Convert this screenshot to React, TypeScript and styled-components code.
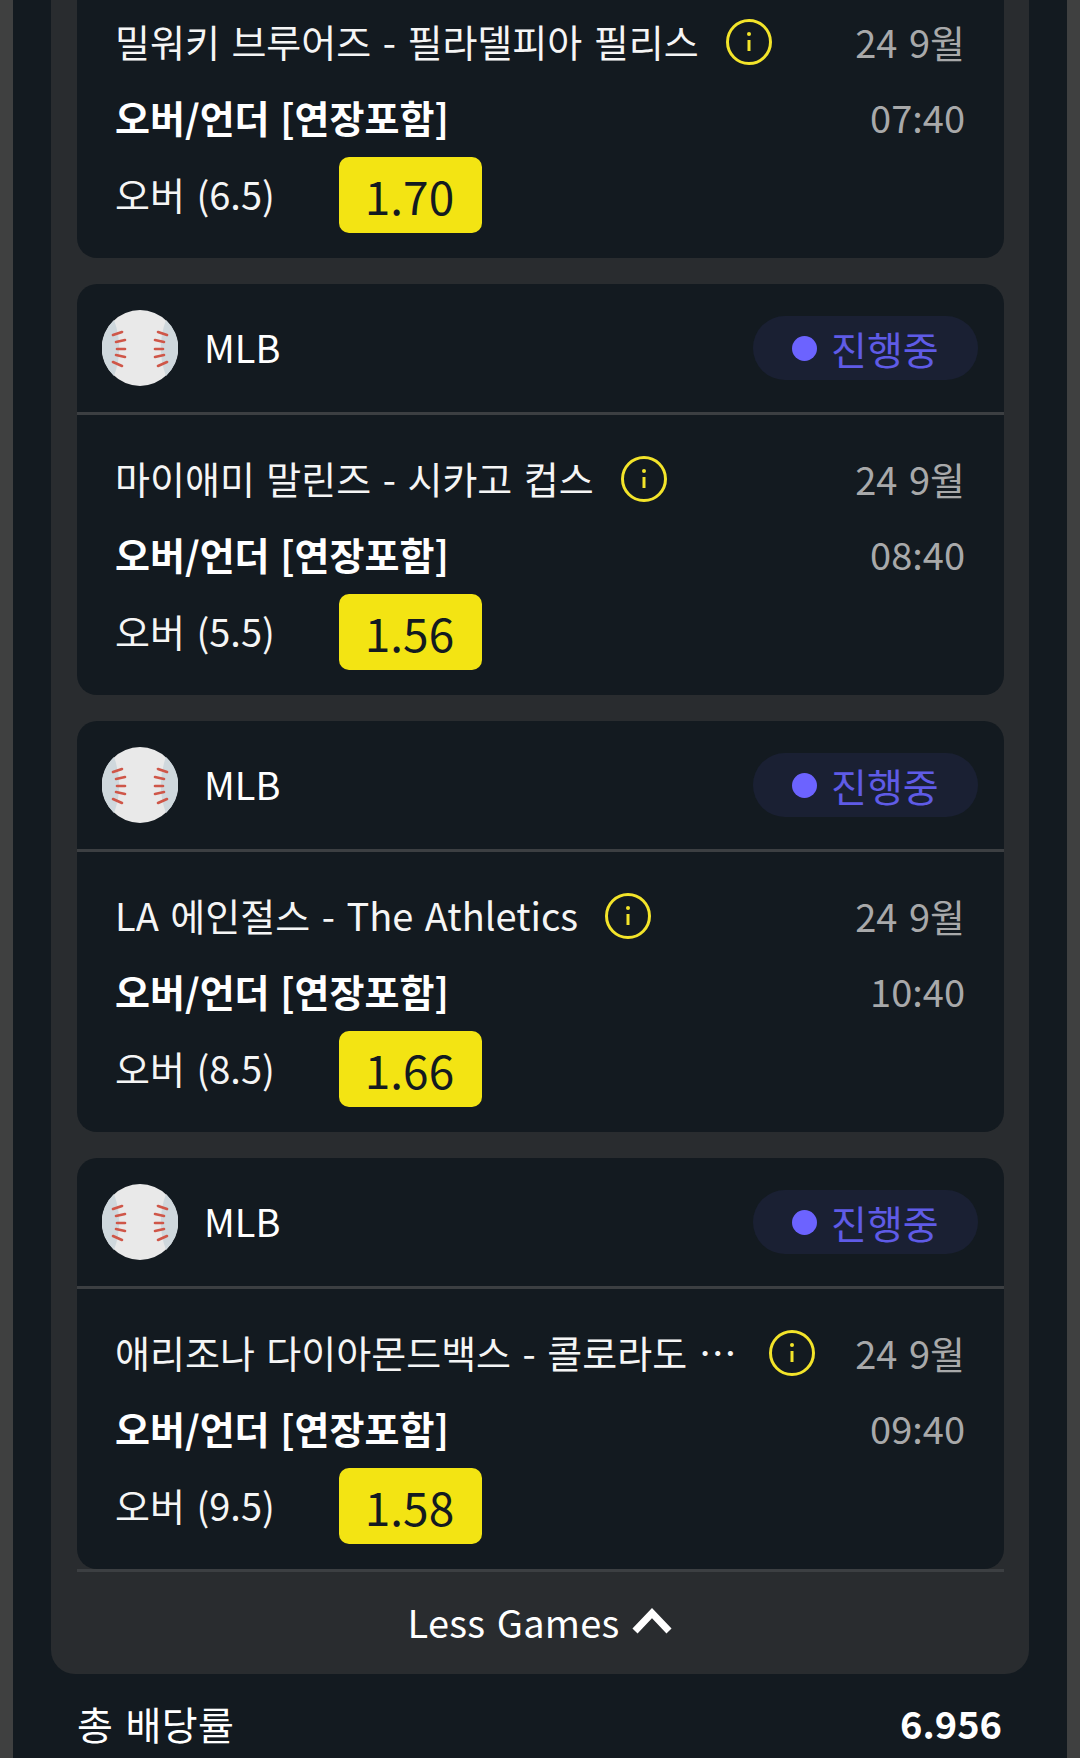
import React from 'react';
import styled, { createGlobalStyle } from 'styled-components';

interface Game {
  title: string;
  line: string;
  odds: string;
  date: string;
  time: string;
}

const games: Game[] = [
  { title: '밀워키 브루어즈 - 필라델피아 필리스', line: '오버 (6.5)', odds: '1.70', date: '24 9월', time: '07:40' },
  { title: '마이애미 말린즈 - 시카고 컵스', line: '오버 (5.5)', odds: '1.56', date: '24 9월', time: '08:40' },
  { title: 'LA 에인절스 - The Athletics', line: '오버 (8.5)', odds: '1.66', date: '24 9월', time: '10:40' },
  { title: '애리조나 다이아몬드백스 - 콜로라도 로키스', line: '오버 (9.5)', odds: '1.58', date: '24 9월', time: '09:40' },
];

const GlobalStyle = createGlobalStyle`
  html, body {
    margin: 0;
    padding: 0;
    background: #131a20;
  }
  body {
    font-family: "Noto Sans CJK KR", "Noto Sans", sans-serif;
    color: #fff;
    word-spacing: 3px;
  }
`;

const Page = styled.div`
  width: 1080px;
  height: 1758px;
  box-sizing: border-box;
  overflow: hidden;
  background: #131a20;
  border-left: 13px solid #3f4040;
  border-right: 13px solid #3f4040;
  padding: 0 38px;
`;

const Panel = styled.div`
  background: #292c2f;
  border-radius: 0 0 24px 24px;
  padding: 0 25px 0 26px;
`;

const Card = styled.div`
  background: #131a20;
  border-radius: 20px;
  & + & {
    margin-top: 26px;
  }
  &:first-child {
    border-radius: 0 0 20px 20px;
  }
`;

const CardHeader = styled.div`
  height: 131px;
  box-sizing: border-box;
  padding: 0 26px 0 25px;
  display: flex;
  align-items: center;
  border-bottom: 3px solid #3c3f42;
`;

const League = styled.span`
  margin: -2px 0 0 26px;
  font-size: 38px;
  line-height: 48px;
  flex: 1;
`;

const LiveBadge = styled.div`
  width: 225px;
  height: 64px;
  border-radius: 32px;
  background: #1a2033;
  display: flex;
  align-items: center;
  padding-left: 39px;
  box-sizing: border-box;
  gap: 14px;
  color: #5f5be6;
  font-size: 39px;
  line-height: 60px;
`;

const LiveDot = styled.span`
  width: 25px;
  height: 25px;
  border-radius: 50%;
  background: #6c63ff;
`;

const CardBody = styled.div<{ $clipped?: boolean }>`
  padding: ${(p) => (p.$clipped ? '20px' : '42px')} 39px 25px 38px;
  display: flex;
  flex-direction: column;
`;

const Row = styled.div<{ $gap: number }>`
  display: flex;
  align-items: center;
  justify-content: space-between;
  height: 44px;
  margin-bottom: ${(p) => p.$gap}px;
`;

const TitleWrap = styled.div`
  display: flex;
  align-items: center;
  gap: 27px;
  min-width: 0;
`;

const Title = styled.div`
  font-size: 38px;
  line-height: 56px;
  margin-top: -2px;
  max-width: 627px;
  white-space: nowrap;
  overflow: hidden;
  text-overflow: ellipsis;
  color: #f5f5f5;
`;

const Market = styled.div`
  font-size: 38px;
  font-weight: 700;
  line-height: 44px;
  word-spacing: 2px;
`;

const Side = styled.div`
  font-size: 38px;
  line-height: 44px;
  color: #a8a9aa;
`;

const OddsRow = styled.div`
  display: flex;
  align-items: center;
  height: 76px;
`;

const Line = styled.div`
  width: 224px;
  font-size: 38px;
  line-height: 44px;
  color: #f5f5f5;
  margin-top: -3px;
`;

const OddsButton = styled.div`
  width: 143px;
  height: 76px;
  box-sizing: border-box;
  padding-right: 2px;
  border-radius: 10px;
  background: #f3e413;
  color: #131a20;
  font-size: 46px;
  display: flex;
  align-items: center;
  justify-content: center;
`;

const LessRow = styled.div`
  height: 105px;
  box-sizing: border-box;
  padding-bottom: 4px;
  border-top: 3px solid #3c3f42;
  display: flex;
  align-items: center;
  justify-content: center;
  gap: 12px;
  font-size: 38px;
  letter-spacing: 0.2px;
`;

const Footer = styled.div`
  display: flex;
  align-items: center;
  justify-content: space-between;
  padding: 24px 27px 0 26px;
  font-size: 38px;
  line-height: 50px;
`;

const TotalLabel = styled.span`
  font-size: 39px;
  letter-spacing: 0.4px;
`;

const Total = styled.span`
  font-weight: 700;
`;

function Baseball() {
  const seam = (flip: boolean) =>
    [
      [11, 25, 20, 22],
      [14, 32, 23, 30],
      [15, 39, 23, 39],
      [14, 45, 23, 47],
      [11, 52, 20, 56],
    ].map(([x1, y1, x2, y2]) => (
      <line
        key={`${flip}-${y1}`}
        x1={flip ? 76 - x1 : x1}
        y1={y1}
        x2={flip ? 76 - x2 : x2}
        y2={y2}
        stroke="#cf5648"
        strokeWidth="2.6"
        strokeLinecap="round"
      />
    ));
  return (
    <svg width="76" height="76" viewBox="0 0 76 76">
      <circle cx="38" cy="38" r="38" fill="#e9e9e9" />
      <path d="M12 10 A38 38 0 0 0 12 66 A80 80 0 0 0 12 10 Z" fill="#cfd8dd" />
      <path d="M64 10 A38 38 0 0 1 64 66 A80 80 0 0 1 64 10 Z" fill="#cfd8dd" />
      {seam(false)}
      {seam(true)}
    </svg>
  );
}

function InfoIcon() {
  return (
    <svg width="46" height="46" viewBox="0 0 46 46" fill="none" style={{ flexShrink: 0 }}>
      <circle cx="23" cy="23" r="21.5" stroke="#f3e42a" strokeWidth="3" />
      <circle cx="23" cy="15" r="2" fill="#f3e42a" />
      <line x1="23" y1="21" x2="23" y2="32" stroke="#f3e42a" strokeWidth="3" />
    </svg>
  );
}

function ChevronUp() {
  return (
    <svg width="42" height="28" viewBox="0 0 42 28" fill="none">
      <path d="M4 24 L21 6 L38 24" stroke="#fff" strokeWidth="7" strokeLinejoin="miter" />
    </svg>
  );
}

function GameCard({ game, clipped }: { game: Game; clipped?: boolean }) {
  return (
    <Card>
      {!clipped && (
        <CardHeader>
          <Baseball />
          <League>MLB</League>
          <LiveBadge>
            <LiveDot />
            진행중
          </LiveBadge>
        </CardHeader>
      )}
      <CardBody $clipped={clipped}>
        <Row $gap={31}>
          <TitleWrap>
            <Title>{game.title}</Title>
            <InfoIcon />
          </TitleWrap>
          <Side>{game.date}</Side>
        </Row>
        <Row $gap={18}>
          <Market>오버/언더 [연장포함]</Market>
          <Side>{game.time}</Side>
        </Row>
        <OddsRow>
          <Line>{game.line}</Line>
          <OddsButton>{game.odds}</OddsButton>
        </OddsRow>
      </CardBody>
    </Card>
  );
}

export default function App() {
  return (
    <>
      <GlobalStyle />
      <Page>
        <Panel>
          {games.map((game, i) => (
            <GameCard key={game.title} game={game} clipped={i === 0} />
          ))}
          <LessRow>
            Less Games
            <ChevronUp />
          </LessRow>
        </Panel>
        <Footer>
          <TotalLabel>총 배당률</TotalLabel>
          <Total>6.956</Total>
        </Footer>
      </Page>
    </>
  );
}
